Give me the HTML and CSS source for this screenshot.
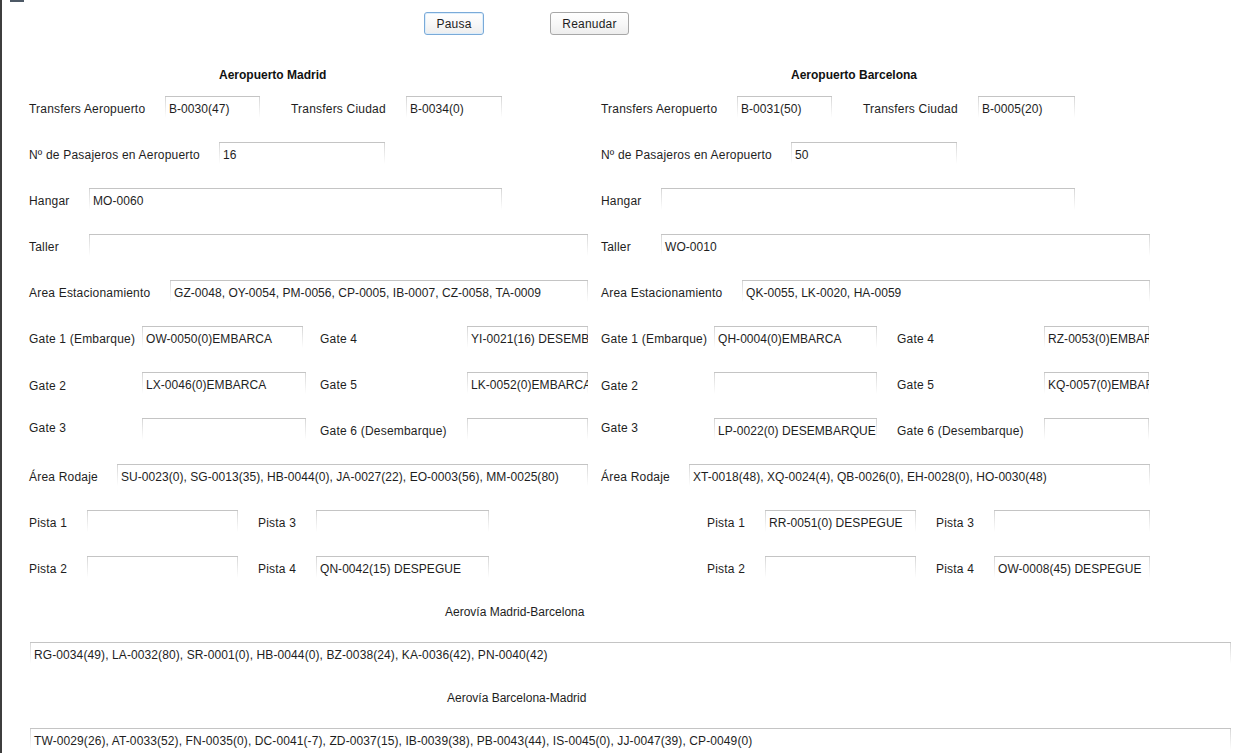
FILE: index.html
```html
<!DOCTYPE html>
<html lang="es">
<head>
<meta charset="utf-8">
<title>Aeropuertos</title>
<link rel="stylesheet" href="styles.css">
</head>
<body>
<div class="page">
  <div class="corner-icon"></div>
  <div class="toolbar">
    <button class="btn btn-focus">Pausa</button>
    <button class="btn">Reanudar</button>
  </div>

  <div class="columns">
    <section class="airport mad">
      <div class="title">Aeropuerto Madrid</div>
      <div class="rows">
        <div class="row">
          <span class="lbl w136">Transfers Aeropuerto</span><span class="fld w95">B-0030(47)</span>
          <span class="lbl w115 ml31">Transfers Ciudad</span><span class="fld w96">B-0034(0)</span>
        </div>
        <div class="row">
          <span class="lbl w190">Nº de Pasajeros en Aeropuerto</span><span class="fld w166">16</span>
        </div>
        <div class="row">
          <span class="lbl w60">Hangar</span><span class="fld w413">MO-0060</span>
        </div>
        <div class="row">
          <span class="lbl w60">Taller</span><span class="fld w499"></span>
        </div>
        <div class="row">
          <span class="lbl w141">Area Estacionamiento</span><span class="fld w418">GZ-0048, OY-0054, PM-0056, CP-0005, IB-0007, CZ-0058, TA-0009</span>
        </div>
        <div class="row">
          <span class="lbl w113">Gate 1 (Embarque)</span><span class="fld w161">OW-0050(0)EMBARCA</span>
          <span class="lbl w147 ml17">Gate 4</span><span class="fld w121">YI-0021(16) DESEMBARQUE</span>
        </div>
        <div class="row">
          <span class="lbl w113 dn1">Gate 2</span><span class="fld w164">LX-0046(0)EMBARCA</span>
          <span class="lbl w147 ml14">Gate 5</span><span class="fld w121">LK-0052(0)EMBARCA</span>
        </div>
        <div class="row">
          <span class="lbl w113 up3">Gate 3</span><span class="fld w164"></span>
          <span class="lbl w147 ml14">Gate 6 (Desembarque)</span><span class="fld w121"></span>
        </div>
        <div class="row">
          <span class="lbl w88">Área Rodaje</span><span class="fld w471">SU-0023(0), SG-0013(35), HB-0044(0), JA-0027(22), EO-0003(56), MM-0025(80)</span>
        </div>
        <div class="row">
          <span class="lbl w58">Pista 1</span><span class="fld w151"></span>
          <span class="lbl w58 ml20">Pista 3</span><span class="fld w173"></span>
        </div>
        <div class="row">
          <span class="lbl w58">Pista 2</span><span class="fld w151"></span>
          <span class="lbl w58 ml20">Pista 4</span><span class="fld w173">QN-0042(15) DESPEGUE</span>
        </div>
      </div>
    </section>

    <section class="airport bcn">
      <div class="title">Aeropuerto Barcelona</div>
      <div class="rows">
        <div class="row">
          <span class="lbl w136">Transfers Aeropuerto</span><span class="fld w95">B-0031(50)</span>
          <span class="lbl w115 ml31">Transfers Ciudad</span><span class="fld w97">B-0005(20)</span>
        </div>
        <div class="row">
          <span class="lbl w190">Nº de Pasajeros en Aeropuerto</span><span class="fld w166">50</span>
        </div>
        <div class="row">
          <span class="lbl w60">Hangar</span><span class="fld w414"></span>
        </div>
        <div class="row">
          <span class="lbl w60">Taller</span><span class="fld w489">WO-0010</span>
        </div>
        <div class="row">
          <span class="lbl w141">Area Estacionamiento</span><span class="fld w408">QK-0055, LK-0020, HA-0059</span>
        </div>
        <div class="row">
          <span class="lbl w113">Gate 1 (Embarque)</span><span class="fld w163">QH-0004(0)EMBARCA</span>
          <span class="lbl w147 ml20">Gate 4</span><span class="fld w105">RZ-0053(0)EMBARCA</span>
        </div>
        <div class="row">
          <span class="lbl w113 dn1">Gate 2</span><span class="fld w163"></span>
          <span class="lbl w147 ml20">Gate 5</span><span class="fld w105">KQ-0057(0)EMBARCA</span>
        </div>
        <div class="row">
          <span class="lbl w113 up3">Gate 3</span><span class="fld w163">LP-0022(0) DESEMBARQUE</span>
          <span class="lbl w147 ml20">Gate 6 (Desembarque)</span><span class="fld w105"></span>
        </div>
        <div class="row">
          <span class="lbl w88">Área Rodaje</span><span class="fld w461">XT-0018(48), XQ-0024(4), QB-0026(0), EH-0028(0), HO-0030(48)</span>
        </div>
        <div class="row">
          <span class="lbl w58 ml106">Pista 1</span><span class="fld w151">RR-0051(0) DESPEGUE</span>
          <span class="lbl w58 ml20">Pista 3</span><span class="fld w156"></span>
        </div>
        <div class="row">
          <span class="lbl w58 ml106">Pista 2</span><span class="fld w151"></span>
          <span class="lbl w58 ml20">Pista 4</span><span class="fld w156">OW-0008(45) DESPEGUE</span>
        </div>
      </div>
    </section>
  </div>

  <div class="airways">
    <div class="aw-title">Aerovía Madrid-Barcelona</div>
    <div class="fld aw-field">RG-0034(49), LA-0032(80), SR-0001(0), HB-0044(0), BZ-0038(24), KA-0036(42), PN-0040(42)</div>
    <div class="aw-title aw-title2">Aerovía Barcelona-Madrid</div>
    <div class="fld aw-field">TW-0029(26), AT-0033(52), FN-0035(0), DC-0041(-7), ZD-0037(15), IB-0039(38), PB-0043(44), IS-0045(0), JJ-0047(39), CP-0049(0)</div>
  </div>
</div>
</body>
</html>
```

FILE: styles.css
```css
html, body {
  margin: 0;
  padding: 0;
  background: #ffffff;
}

body {
  font-family: "Liberation Sans", Arial, sans-serif;
  font-size: 12px;
  color: #1e1e1e;
  overflow: hidden;
}

.page {
  position: relative;
  height: 753px;
  border-left: 2px solid #3e3e3e;
  box-sizing: border-box;
  padding-top: 12px;
}

.corner-icon {
  position: absolute;
  top: 0;
  left: 8px;
  width: 14px;
  height: 2px;
  background: #4d5966;
}

.toolbar {
  display: flex;
  align-items: center;
  gap: 66px;
  padding-left: 422px;
  height: 23px;
}

.btn {
  font-family: "Liberation Sans", Arial, sans-serif;
  font-size: 12px;
  letter-spacing: 0.2px;
  color: #1e1e1e;
  height: 23px;
  padding: 0;
  border: 1px solid #a7a7a7;
  border-radius: 3px;
  background: linear-gradient(to bottom, #ffffff 0%, #f7f7f7 55%, #ededed 100%);
  width: 79px;
}

.btn-focus {
  width: 60px;
  border-color: #7aaad8;
  box-shadow: inset 0 0 0 1px #dcedfb;
}

.columns {
  display: flex;
  padding-left: 27px;
  margin-top: 32px;
}

.airport {
  width: 572px;
  flex: none;
}

.title {
  font-weight: bold;
  height: 15px;
  line-height: 15px;
  padding-top: 1px;
  padding-left: 190px;
  margin-bottom: 13px;
  color: #111;
}

.rows {
  display: flex;
  flex-direction: column;
  gap: 24px;
}

.row {
  display: flex;
  height: 22px;
  align-items: flex-start;
}

.lbl {
  flex: none;
  height: 22px;
  line-height: 26px;
  letter-spacing: 0.2px;
  white-space: nowrap;
}

.up3 { position: relative; top: -3px; }
.dn1 { position: relative; top: 1px; }

.fld {
  flex: none;
  box-sizing: border-box;
  height: 22px;
  line-height: 25px;
  padding: 0 3px 0 4px;
  letter-spacing: 0.05px;
  border-top: 1px solid #c4c4c4;
  background:
    linear-gradient(to bottom, #d6d6d6, #ffffff) left top / 1px 100% no-repeat,
    linear-gradient(to bottom, #d6d6d6, #ffffff) right top / 1px 100% no-repeat,
    #ffffff;
  white-space: nowrap;
  overflow: hidden;
  color: #1e1e1e;
}

.w58 { width: 58px; }
.w60 { width: 60px; }
.w88 { width: 88px; }
.w95 { width: 95px; }
.w96 { width: 96px; }
.w97 { width: 97px; }
.w105 { width: 105px; }
.w113 { width: 113px; }
.w115 { width: 115px; }
.w121 { width: 121px; }
.w136 { width: 136px; }
.w141 { width: 141px; }
.w147 { width: 147px; }
.w151 { width: 151px; }
.w156 { width: 156px; }
.w161 { width: 161px; }
.w163 { width: 163px; }
.w164 { width: 164px; }
.w166 { width: 166px; }
.w173 { width: 173px; }
.w190 { width: 190px; }
.w408 { width: 408px; }
.w413 { width: 413px; }
.w414 { width: 414px; }
.w418 { width: 418px; }
.w461 { width: 461px; }
.w471 { width: 471px; }
.w489 { width: 489px; }
.w499 { width: 499px; }

.ml14 { margin-left: 14px; }
.ml17 { margin-left: 17px; }
.ml20 { margin-left: 20px; }
.ml31 { margin-left: 31px; }
.ml106 { margin-left: 106px; }

.airways {
  padding-left: 28px;
  margin-top: 25px;
}

.aw-title {
  height: 16px;
  line-height: 16px;
  padding-top: 1px;
  padding-left: 415px;
  margin-bottom: 22px;
}

.aw-title2 {
  margin-top: 25px;
  padding-left: 417px;
}

.aw-field {
  width: 1201px;
  letter-spacing: 0.1px;
}
```
